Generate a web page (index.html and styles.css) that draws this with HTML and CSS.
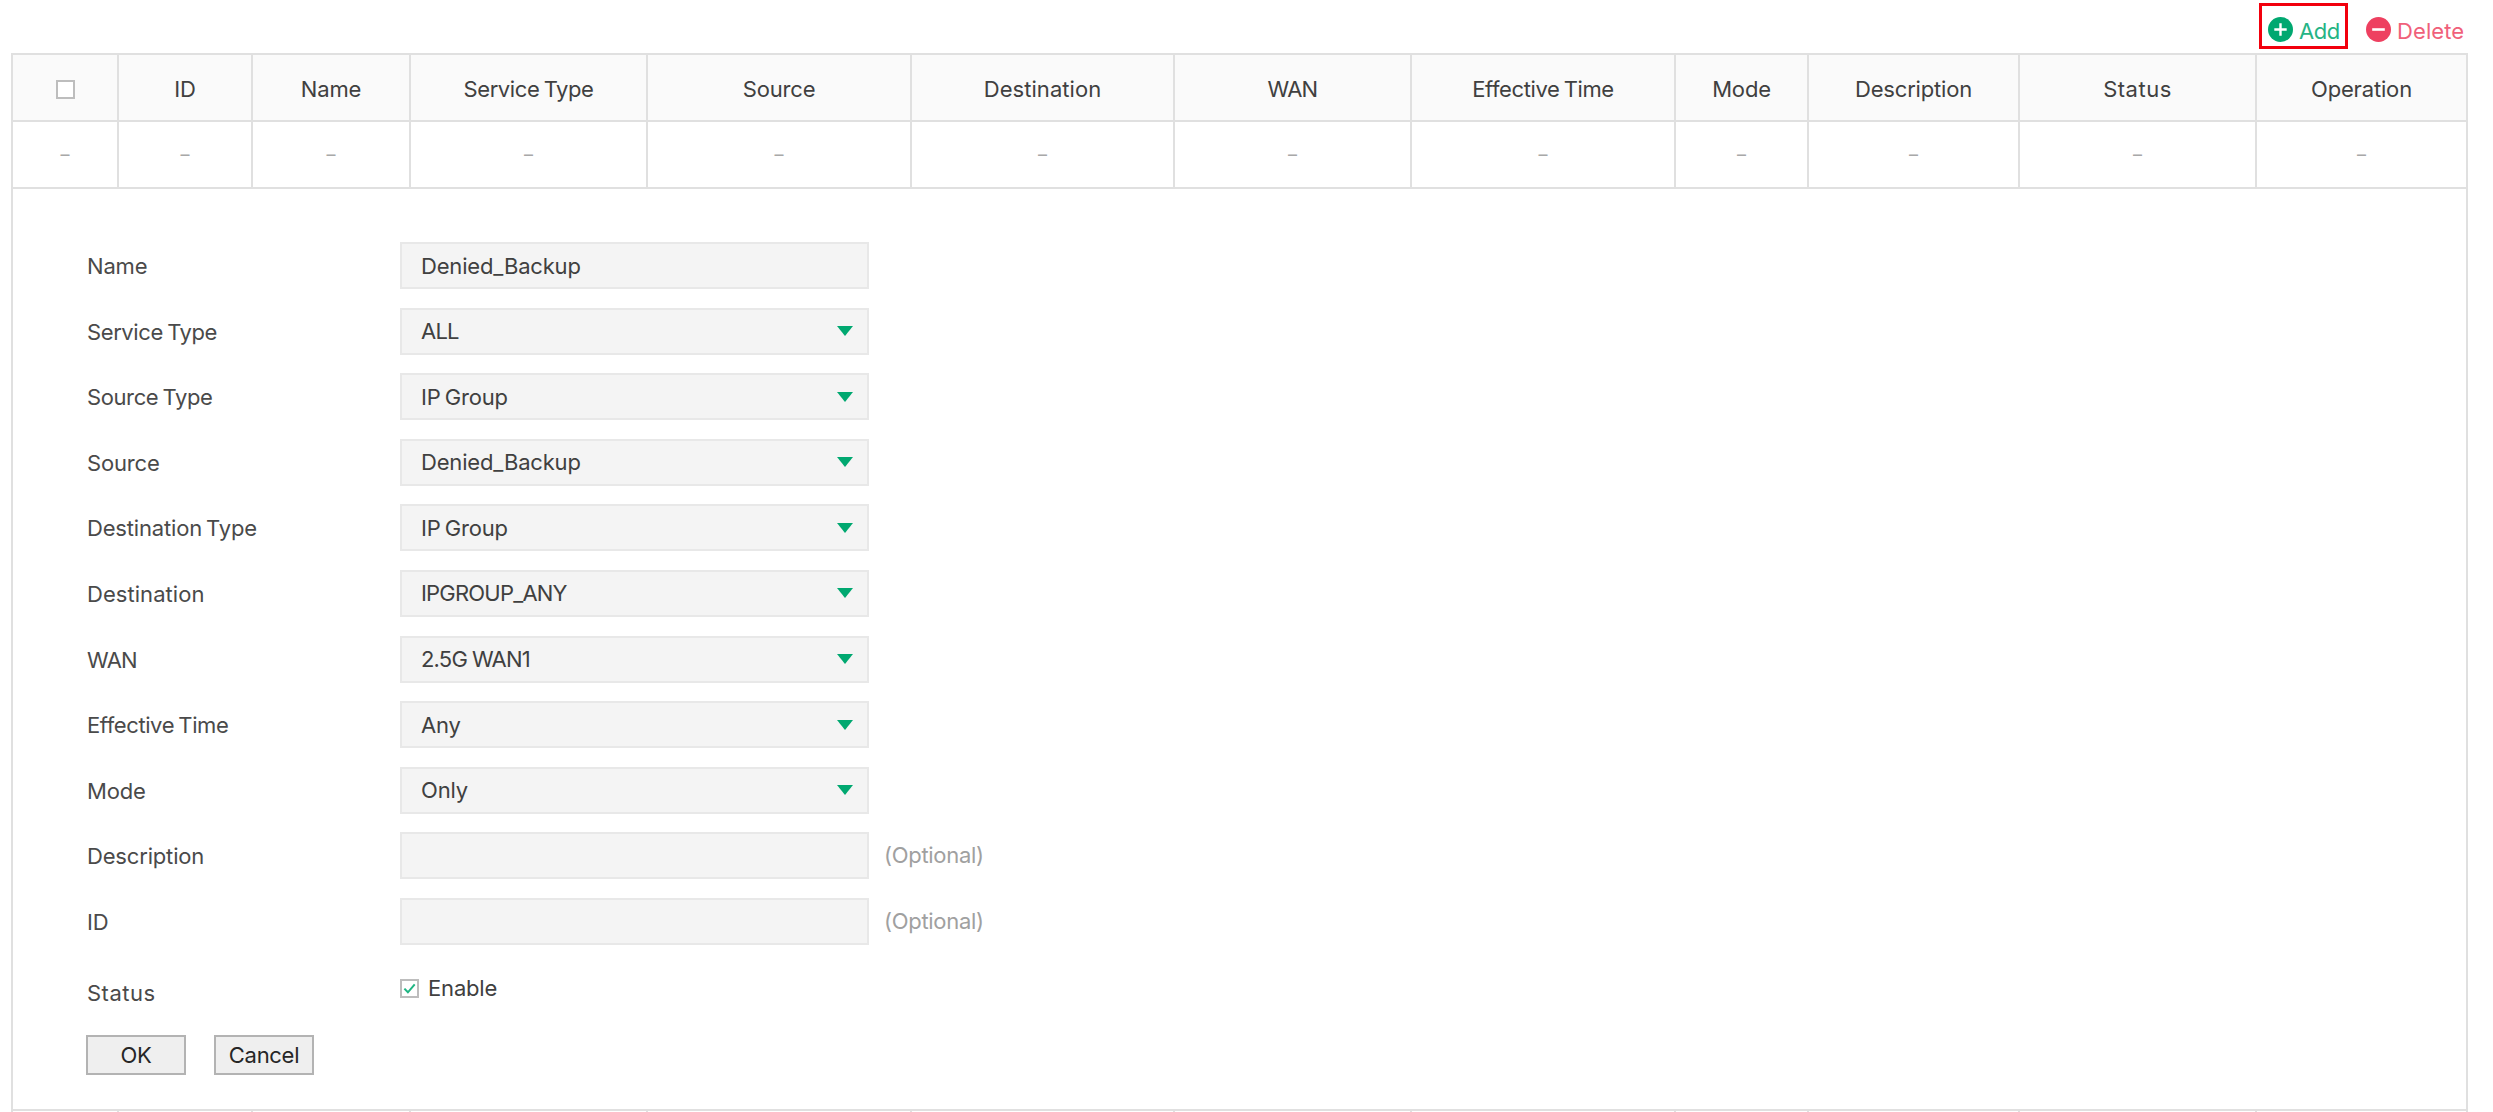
FILE: index.html
```html
<!DOCTYPE html>
<html lang="en">
<head>
<meta charset="utf-8">
<title>Policy Routing</title>
<link rel="stylesheet" href="styles.css">
</head>
<body>
<div class="toolbar">
  <a class="tool add"><svg class="tool-icon" viewBox="0 0 25 25"><circle cx="12.5" cy="12.5" r="12.5" fill="#00a870"/><path d="M12.5 6.3v12.4M6.3 12.5h12.4" stroke="#fff" stroke-width="2.4"/></svg><span>Add</span></a>
  <a class="tool delete"><svg class="tool-icon" viewBox="0 0 25 25"><circle cx="12.5" cy="12.5" r="12.5" fill="#ee4060"/><path d="M6.2 12.5h12.6" stroke="#fff" stroke-width="2.6"/></svg><span>Delete</span></a>
</div>
<div class="panel">
  <div class="row head">
    <div><span class="box"></span></div><div>ID</div><div>Name</div><div class="tight">Service Type</div><div>Source</div><div class="wide">Destination</div><div class="caps">WAN</div><div class="tight">Effective Time</div><div>Mode</div><div>Description</div><div class="wider">Status</div><div>Operation</div>
  </div>
  <div class="row empty">
    <div>–</div><div>–</div><div>–</div><div>–</div><div>–</div><div>–</div><div>–</div><div>–</div><div>–</div><div>–</div><div>–</div><div>–</div>
  </div>
  <div class="form">
    <div class="field"><label>Name</label><div class="input">Denied_Backup</div></div>
    <div class="field"><label class="tight">Service Type</label><div class="input select caps">ALL</div></div>
    <div class="field"><label class="tight">Source Type</label><div class="input select">IP Group</div></div>
    <div class="field"><label>Source</label><div class="input select">Denied_Backup</div></div>
    <div class="field"><label>Destination Type</label><div class="input select">IP Group</div></div>
    <div class="field"><label class="wide">Destination</label><div class="input select caps">IPGROUP_ANY</div></div>
    <div class="field"><label class="caps">WAN</label><div class="input select caps">2.5G WAN1</div></div>
    <div class="field"><label class="tight">Effective Time</label><div class="input select">Any</div></div>
    <div class="field"><label>Mode</label><div class="input select">Only</div></div>
    <div class="field"><label>Description</label><div class="input"></div><span class="hint">(Optional)</span></div>
    <div class="field"><label>ID</label><div class="input"></div><span class="hint">(Optional)</span></div>
    <div class="field status"><label class="wider">Status</label><span class="check"><span class="box"><svg viewBox="0 0 15 15"><path d="M2.4 7.6l3.5 3.7 6.8-8" fill="none" stroke="#1fb583" stroke-width="2"/></svg></span>Enable</span></div>
    <div class="buttons"><button>OK</button><button>Cancel</button></div>
  </div>
  <div class="row next"><div></div><div></div><div></div><div></div><div></div><div></div><div></div><div></div><div></div><div></div><div></div><div></div></div>
</div>
</body>
</html>
```
FILE: styles.css
```css
* { box-sizing: border-box; }
html, body { height: 100%; }
body {
  margin: 0;
  overflow: hidden;
  background: #fff;
  color: #404040;
  font: 22px/30px Inter, "Liberation Sans", sans-serif;
  letter-spacing: -0.17px;
  word-spacing: -2px;
}
.wide { letter-spacing: 0.05px; }
.wider { letter-spacing: 0.5px; }
.tight { letter-spacing: -0.4px; word-spacing: -1.5px; }
.caps { letter-spacing: -0.8px; word-spacing: -0.5px; }
.toolbar {
  display: flex;
  justify-content: flex-end;
  gap: 10px;
  height: 53px;
  padding: 3px 19px 0 0;
}
.tool {
  display: flex;
  align-items: center;
  gap: 6px;
  height: 46px;
}
.tool span { padding-top: 10px; }
.tool-icon { width: 25px; height: 25px; align-self: flex-start; margin-top: 14px; }
.add { width: 89px; border: 3px solid #f2000d; color: #25b485; padding: 0 0 0 6px; }
.add .tool-icon { margin-top: 11px; }
.add span { letter-spacing: -0.4px; }
.delete { width: 116px; color: #f0607a; padding: 0 0 0 8px; }
.delete span { letter-spacing: 0.1px; }
.panel {
  width: 2457px;
  margin-left: 11px;
  border: solid #e0e0e0;
  border-width: 2px 2px 0;
}
.row {
  display: grid;
  grid-template-columns: 104px 134px 158px 237px 264px 263px 237px 264px 133px 211px 237px 1fr;
  height: 67px;
  border-bottom: 2px solid #e0e0e0;
}
.row > div {
  display: flex;
  align-items: center;
  justify-content: center;
  border-left: 2px solid #e0e0e0;
}
.row > div:first-child { border-left: 0; }
.head { background: #fafafa; }
.head > div { padding-top: 3px; }
.empty { color: #a8a8a8; font-size: 18px; }
.next { height: 20px; border: 0; }
.box {
  display: block;
  width: 19px;
  height: 19px;
  border: 2px solid #bdbdbd;
  background: #fff;
}
.box svg { display: block; width: 15px; height: 15px; }
.form {
  height: 922px;
  padding: 53px 0 0 74px;
  border-bottom: 2px solid #e0e0e0;
}
.field { display: flex; height: 65.6px; }
label { width: 313px; padding-top: 9px; color: #4a4a4a; }
.input {
  display: flex;
  align-items: center;
  justify-content: space-between;
  width: 469px;
  height: 47px;
  padding: 0 14px 0 19px;
  border: 2px solid #e8e8e8;
  background: #f4f4f4;
}
.select::after {
  content: "";
  border: 8px solid transparent;
  border-top: 10px solid #00a870;
  border-bottom: 0;
}
.hint { padding: 8px 0 0 15px; color: #a0a0a0; letter-spacing: -0.3px; }
.status label { padding-top: 14px; }
.check { display: flex; gap: 9px; padding-top: 9px; }
.check .box { margin-top: 6px; }
.buttons { display: flex; gap: 28px; margin: 6px 0 0 -1px; }
button {
  width: 100px;
  height: 40px;
  padding: 0;
  border: 2px solid #b3b3b3;
  background: #efefef;
  color: #262626;
  font: inherit;
  letter-spacing: -0.3px;
}
```
